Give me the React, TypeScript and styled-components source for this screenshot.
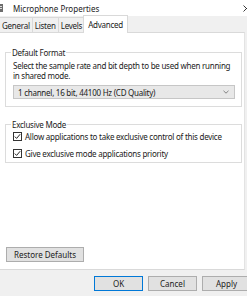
import React from 'react';
import styled, { createGlobalStyle } from 'styled-components';

const GlobalStyle = createGlobalStyle`
  html, body {
    margin: 0;
    padding: 0;
    background: #ffffff;
  }
  body {
    font-family: "Noto Sans", "Open Sans", Arial, sans-serif;
    font-size: 8px;
    letter-spacing: -0.25px;
    color: #1b1b1b;
  }
`;

const Dialog = styled.div`
  width: 247px;
  height: 296px;
  overflow: hidden;
  display: flex;
  flex-direction: column;
  background: #f0f0f0;
`;

const TitleBar = styled.div`
  height: 16px;
  flex: none;
  background: #ffffff;
  display: flex;
  align-items: center;
`;

const AppIcon = styled.span`
  width: 6px;
  height: 10px;
  margin-left: -2px;
  margin-right: 9px;
  display: flex;
`;

const Title = styled.span`
  font-size: 8px;
  letter-spacing: 0;
  color: #222;
`;

const Close = styled.span`
  margin-left: auto;
  margin-right: -3px;
  display: flex;
`;

const TabStrip = styled.div`
  height: 17px;
  flex: none;
  display: flex;
  align-items: flex-end;
`;

const Tab = styled.div<{ $active?: boolean }>`
  height: ${(p) => (p.$active ? 18 : 16)}px;
  padding: 0 ${(p) => (p.$active ? 4 : 2)}px;
  margin-left: ${(p) => (p.$active ? -1 : 0)}px;
  box-sizing: border-box;
  display: flex;
  align-items: center;
  background: ${(p) => (p.$active ? '#ffffff' : '#f0f0f0')};
  border: 1px solid #d9d9d9;
  border-bottom: ${(p) => (p.$active ? 'none' : '1px solid #d9d9d9')};
  border-right: ${(p) => (p.$active ? '1px solid #d9d9d9' : 'none')};
  position: relative;
  z-index: ${(p) => (p.$active ? 2 : 1)};
  color: #222;
  &:first-child {
    border-left: none;
  }
`;

const Panel = styled.div`
  flex: 1;
  background: #ffffff;
  border-top: 1px solid #d9d9d9;
  border-right: 1px solid #e3e3e3;
  border-bottom: 1px solid #d9d9d9;
  margin-right: 2px;
  margin-top: -1px;
  padding: 14px 2px 0 5px;
  display: flex;
  flex-direction: column;
`;

const Group = styled.fieldset<{ $height: number }>`
  margin: 0 0 12px 0;
  padding: 0 0 0 7px;
  height: ${(p) => p.$height}px;
  box-sizing: border-box;
  border: 1px solid #dcdcdc;
  display: flex;
  flex-direction: column;
  min-width: 0;
`;

const Legend = styled.legend`
  padding: 0 1px;
  margin-left: -2px;
  color: #222;
  font-size: 8px;
`;

const Hint = styled.p`
  margin: 3px 0 0 0;
  line-height: 10px;
  color: #222;
`;

const Combo = styled.div`
  margin: 4px 6px 0 0;
  height: 14px;
  box-sizing: border-box;
  border: 1px solid #c6c6c6;
  background: #e8e8e8;
  display: flex;
  align-items: center;
  padding: 0 5px 0 4px;
`;

const ComboText = styled.span`
  flex: 1;
`;

const CheckRow = styled.label`
  display: flex;
  align-items: center;
  gap: 3px;
  height: 11px;
  margin-top: 6px;
  &:first-of-type {
    margin-top: 1px;
  }
`;

const Box = styled.span`
  width: 9px;
  height: 9px;
  box-sizing: border-box;
  border: 1px solid #333;
  background: #fff;
  display: flex;
  align-items: center;
  justify-content: center;
`;

const Spacer = styled.div`
  flex: 1;
`;

const RestoreButton = styled.button`
  width: 78px;
  height: 15px;
  margin: 0 0 7px 1px;
  font: inherit;
  color: #222;
  background: #e1e1e1;
  border: 1px solid #adadad;
  padding: 0;
`;

const Footer = styled.div`
  height: 26px;
  flex: none;
  display: flex;
  align-items: center;
  justify-content: flex-end;
  gap: 5px;
  margin-right: -4px;
`;

const Button = styled.button<{ $default?: boolean }>`
  width: 49px;
  height: 15px;
  padding: 0;
  font: inherit;
  color: #222;
  background: #e1e1e1;
  border: 1px solid ${(p) => (p.$default ? '#0078d7' : '#adadad')};
`;

function Check() {
  return (
    <Box>
      <svg width="7" height="7" viewBox="0 0 7 7">
        <path d="M0.8 3.6 L2.6 5.4 L6.2 1.2" fill="none" stroke="#222" strokeWidth="1" />
      </svg>
    </Box>
  );
}

export default function App() {
  return (
    <>
      <GlobalStyle />
      <Dialog>
        <TitleBar>
          <AppIcon>
            <svg width="6" height="10" viewBox="0 0 6 10">
              <rect x="0" y="1" width="5" height="8" fill="#6d6d6d" />
              <rect x="1" y="3" width="3" height="1" fill="#ddd" />
              <rect x="1" y="5" width="3" height="1" fill="#ddd" />
            </svg>
          </AppIcon>
          <Title>Microphone Properties</Title>
          <Close>
            <svg width="7" height="7" viewBox="0 0 7 7">
              <path d="M0.5 0.5 L6.5 6.5 M6.5 0.5 L0.5 6.5" stroke="#222" strokeWidth="0.9" />
            </svg>
          </Close>
        </TitleBar>
        <TabStrip>
          <Tab>General</Tab>
          <Tab>Listen</Tab>
          <Tab>Levels</Tab>
          <Tab $active>Advanced</Tab>
        </TabStrip>
        <Panel>
          <Group $height={60}>
            <Legend>Default Format</Legend>
            <Hint>
              Select the sample rate and bit depth to be used when running
              <br />
              in shared mode.
            </Hint>
            <Combo>
              <ComboText>1 channel, 16 bit, 44100 Hz (CD Quality)</ComboText>
              <svg width="6" height="4" viewBox="0 0 6 4">
                <path d="M0.5 0.8 L3 3.2 L5.5 0.8" fill="none" stroke="#777" strokeWidth="0.9" />
              </svg>
            </Combo>
          </Group>
          <Group $height={44}>
            <Legend>Exclusive Mode</Legend>
            <CheckRow>
              <Check />
              Allow applications to take exclusive control of this device
            </CheckRow>
            <CheckRow>
              <Check />
              Give exclusive mode applications priority
            </CheckRow>
          </Group>
          <Spacer />
          <div>
            <RestoreButton>Restore Defaults</RestoreButton>
          </div>
        </Panel>
        <Footer>
          <Button $default>OK</Button>
          <Button>Cancel</Button>
          <Button>Apply</Button>
        </Footer>
      </Dialog>
    </>
  );
}
